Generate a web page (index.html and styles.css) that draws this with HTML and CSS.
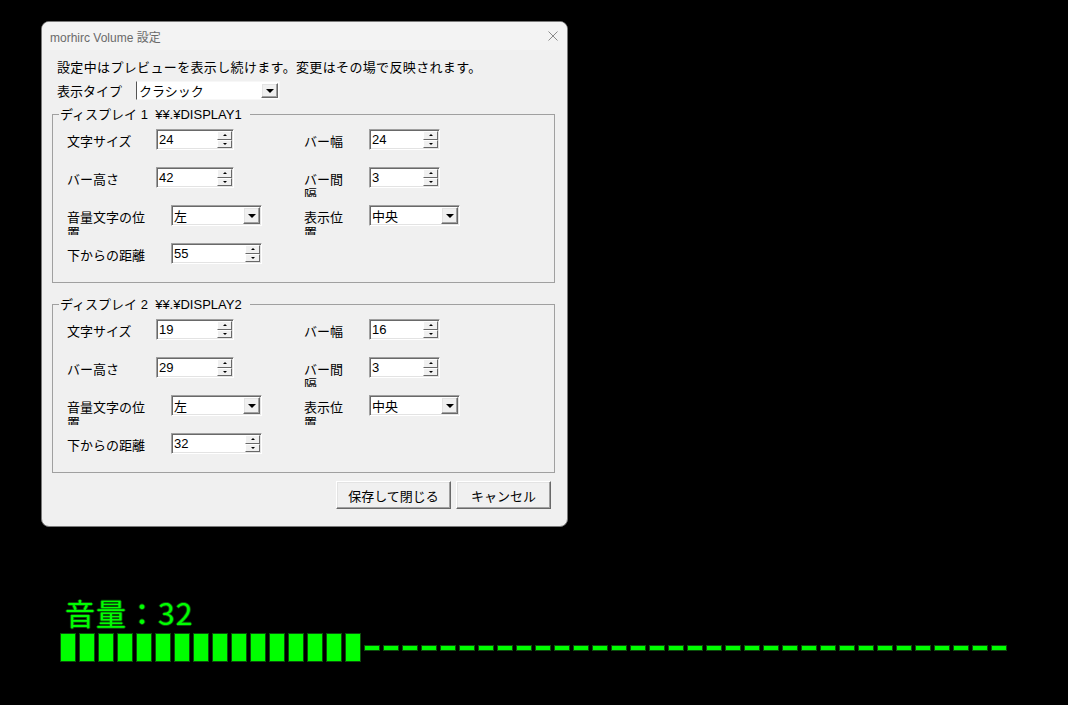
FILE: index.html
```html
<!DOCTYPE html>
<html lang="ja">
<head>
  <meta charset="UTF-8">
  <meta name="viewport" content="width=device-width, initial-scale=1.0">
  <title>morhirc Volume 設定</title>
  <link rel="stylesheet" href="styles.css">
</head>
<body>
  <!-- 設定ダイアログ -->
  <div class="window">
    <div class="titlebar">
      <span class="title">morhirc Volume 設定</span>
      <svg class="close" width="10" height="10" viewBox="0 0 10 10">
        <path d="M0.5 0.5 L9.5 9.5 M9.5 0.5 L0.5 9.5" stroke="#8a8a8a" stroke-width="1" fill="none"/>
      </svg>
    </div>

    <div class="client">
      <p class="note">設定中はプレビューを表示し続けます。変更はその場で反映されます。</p>

      <div class="type-row">
        <span class="type-label">表示タイプ</span>
        <div class="combo flat type-combo">
          <span class="value">クラシック</span>
          <span class="drop"></span>
        </div>
      </div>

      <!-- ディスプレイ 1 -->
      <fieldset class="group">
        <legend>ディスプレイ 1&nbsp;&nbsp;¥¥.¥DISPLAY1</legend>
        <div class="fields">
          <div class="field">
            <span class="lbl">文字サイズ</span>
            <div class="spin short"><span class="value">24</span><span class="updown"><span class="up"></span><span class="down"></span></span></div>
          </div>
          <div class="field">
            <span class="lbl right">バー幅</span>
            <div class="spin small"><span class="value">24</span><span class="updown"><span class="up"></span><span class="down"></span></span></div>
          </div>

          <div class="field">
            <span class="lbl">バー高さ</span>
            <div class="spin short"><span class="value">42</span><span class="updown"><span class="up"></span><span class="down"></span></span></div>
          </div>
          <div class="field">
            <span class="lbl right">バー間隔</span>
            <div class="spin small"><span class="value">3</span><span class="updown"><span class="up"></span><span class="down"></span></span></div>
          </div>

          <div class="field">
            <span class="lbl wide">音量文字の位置</span>
            <div class="combo"><span class="value">左</span><span class="drop"></span></div>
          </div>
          <div class="field">
            <span class="lbl right">表示位置</span>
            <div class="combo"><span class="value">中央</span><span class="drop"></span></div>
          </div>

          <div class="field">
            <span class="lbl wide">下からの距離</span>
            <div class="spin long"><span class="value">55</span><span class="updown"><span class="up"></span><span class="down"></span></span></div>
          </div>
        </div>
      </fieldset>

      <!-- ディスプレイ 2 -->
      <fieldset class="group second">
        <legend>ディスプレイ 2&nbsp;&nbsp;¥¥.¥DISPLAY2</legend>
        <div class="fields">
          <div class="field">
            <span class="lbl">文字サイズ</span>
            <div class="spin short"><span class="value">19</span><span class="updown"><span class="up"></span><span class="down"></span></span></div>
          </div>
          <div class="field">
            <span class="lbl right">バー幅</span>
            <div class="spin small"><span class="value">16</span><span class="updown"><span class="up"></span><span class="down"></span></span></div>
          </div>

          <div class="field">
            <span class="lbl">バー高さ</span>
            <div class="spin short"><span class="value">29</span><span class="updown"><span class="up"></span><span class="down"></span></span></div>
          </div>
          <div class="field">
            <span class="lbl right">バー間隔</span>
            <div class="spin small"><span class="value">3</span><span class="updown"><span class="up"></span><span class="down"></span></span></div>
          </div>

          <div class="field">
            <span class="lbl wide">音量文字の位置</span>
            <div class="combo"><span class="value">左</span><span class="drop"></span></div>
          </div>
          <div class="field">
            <span class="lbl right">表示位置</span>
            <div class="combo"><span class="value">中央</span><span class="drop"></span></div>
          </div>

          <div class="field">
            <span class="lbl wide">下からの距離</span>
            <div class="spin long"><span class="value">32</span><span class="updown"><span class="up"></span><span class="down"></span></span></div>
          </div>
        </div>
      </fieldset>

      <div class="buttons">
        <button type="button" class="btn save">保存して閉じる</button>
        <button type="button" class="btn cancel">キャンセル</button>
      </div>
    </div>
  </div>

  <!-- プレビュー表示 -->
  <div class="preview">
    <div class="volume-text">音量：32</div>
    <div class="meter">
      <span class="seg"></span><span class="seg"></span><span class="seg"></span><span class="seg"></span>
      <span class="seg"></span><span class="seg"></span><span class="seg"></span><span class="seg"></span>
      <span class="seg"></span><span class="seg"></span><span class="seg"></span><span class="seg"></span>
      <span class="seg"></span><span class="seg"></span><span class="seg"></span><span class="seg"></span>
      <span class="seg off"></span><span class="seg off"></span><span class="seg off"></span><span class="seg off"></span>
      <span class="seg off"></span><span class="seg off"></span><span class="seg off"></span><span class="seg off"></span>
      <span class="seg off"></span><span class="seg off"></span><span class="seg off"></span><span class="seg off"></span>
      <span class="seg off"></span><span class="seg off"></span><span class="seg off"></span><span class="seg off"></span>
      <span class="seg off"></span><span class="seg off"></span><span class="seg off"></span><span class="seg off"></span>
      <span class="seg off"></span><span class="seg off"></span><span class="seg off"></span><span class="seg off"></span>
      <span class="seg off"></span><span class="seg off"></span><span class="seg off"></span><span class="seg off"></span>
      <span class="seg off"></span><span class="seg off"></span><span class="seg off"></span><span class="seg off"></span>
      <span class="seg off"></span><span class="seg off"></span>
    </div>
  </div>
</body>
</html>
```

FILE: styles.css
```css
body {
  margin: 0;
  padding: 0;
  background-color: #000;
  font-family: "Noto Sans CJK JP", sans-serif;
}

.window {
  width: 527px;
  height: 506px;
  margin: 21px 0 0 41px;
  box-sizing: border-box;
  border: 1px solid #7a7a7a;
  border-radius: 8px;
  overflow: hidden;
  background-color: #f0f0f0;
}

.titlebar {
  height: 28px;
  display: flex;
  align-items: center;
  justify-content: space-between;
  padding: 0 9px 0 8px;
  background-color: #f3f3f3;
}

.title {
  font-family: "Liberation Sans", "Noto Sans CJK JP", sans-serif;
  font-size: 12px;
  color: #6a6a6a;
}

.client {
  padding: 8px 12px 0 10px;
  font-size: 13px;
  color: #000;
}

.note {
  margin: 0;
  padding-left: 5px;
  line-height: 17px;
  letter-spacing: 0.35px;
}

.type-row {
  display: flex;
  align-items: center;
  margin-top: 6px;
  padding-left: 5px;
}

.type-label {
  width: 79px;
  line-height: 19px;
}

/* コンボボックスとスピン */
.spin, .combo {
  display: flex;
  height: 21px;
  box-sizing: border-box;
  padding: 1px;
  background-color: #fff;
  border: 1px solid;
  border-color: #a0a0a0 #fff #fff #a0a0a0;
  box-shadow: inset 1px 1px #696969, inset -1px -1px #e3e3e3;
}

.spin .value, .combo .value {
  flex: 1;
  padding-left: 1px;
  line-height: 17px;
}

.spin .value {
  font-family: "Liberation Sans", "Noto Sans CJK JP", sans-serif;
}

.spin.short { width: 78px; }
.spin.small { width: 71px; }
.spin.long { width: 91px; }
.combo { width: 91px; }

.type-combo {
  width: 144px;
  height: 19px;
}

.combo.flat {
  border-color: #f7f7f7;
  border-left-color: #555;
  box-shadow: none;
}

.combo.flat .value {
  line-height: 15px;
}

.drop {
  width: 17px;
  display: flex;
  align-items: center;
  justify-content: center;
  box-sizing: border-box;
  background-color: #f0f0f0;
  border: 1px solid;
  border-color: #fff #696969 #696969 #fff;
  box-shadow: inset -1px -1px #a0a0a0, inset 1px 1px #e3e3e3;
}

.drop::after {
  content: "";
  border-left: 4px solid transparent;
  border-right: 4px solid transparent;
  border-top: 4px solid #000;
}

.updown {
  width: 15px;
  display: flex;
  flex-direction: column;
}

.updown .up, .updown .down {
  flex: 1;
  display: flex;
  align-items: center;
  justify-content: center;
  box-sizing: border-box;
  background-color: #f0f0f0;
  border: 1px solid;
  border-color: #fff #696969 #696969 #fff;
}

.updown .up::after {
  content: "";
  border-left: 2px solid transparent;
  border-right: 2px solid transparent;
  border-bottom: 2px solid #000;
}

.updown .down::after {
  content: "";
  border-left: 2px solid transparent;
  border-right: 2px solid transparent;
  border-top: 2px solid #000;
}

/* グループ */
.group {
  margin: 7px 0 0 0;
  padding: 0 6px 18px 6px;
  border: 1px solid #a0a0a0;
  min-inline-size: 0;
}

.group.second {
  margin-top: 14px;
}

.group legend {
  padding: 0 8px 0 1px;
  line-height: 15px;
  font-family: "Liberation Sans", "Noto Sans CJK JP", sans-serif;
}

.fields {
  display: grid;
  grid-template-columns: 237px 1fr;
  grid-auto-rows: 21px;
  row-gap: 17px;
  padding: 7px 0 0 8px;
}

.field {
  display: flex;
  align-items: flex-start;
}

.lbl {
  width: 89px;
  height: 30px;
  box-sizing: border-box;
  padding-top: 4px;
  line-height: 15px;
  overflow: hidden;
}

.lbl.wide {
  width: 104px;
  padding-right: 16px;
}

.lbl.right {
  width: 65px;
  padding-right: 21px;
}

/* ボタン */
.buttons {
  display: flex;
  justify-content: flex-end;
  gap: 5px;
  margin-top: 8px;
  padding-right: 4px;
}

.btn {
  height: 28px;
  box-sizing: border-box;
  font-family: "Noto Sans CJK JP", sans-serif;
  font-size: 13px;
  color: #000;
  background-color: #f0f0f0;
  border: 1px solid;
  border-color: #fff #696969 #696969 #fff;
  box-shadow: inset -1px -1px #a0a0a0, inset 1px 1px #e3e3e3;
  padding: 0;
}

.btn.save { width: 115px; }
.btn.cancel { width: 95px; }

/* プレビュー */
.preview {
  margin: 70px 0 0 60px;
}

.volume-text {
  margin-left: 5px;
  font-size: 30px;
  line-height: 30px;
  letter-spacing: 1px;
  color: #00ff00;
  text-shadow: 1px 0 #0a4a0a, -1px 0 #0a4a0a, 0 1px #0a4a0a, 0 -1px #0a4a0a;
}

.meter {
  display: flex;
  align-items: center;
  gap: 3px;
  margin-top: 6px;
  height: 29px;
}

.seg {
  width: 16px;
  height: 29px;
  box-sizing: border-box;
  border: 1px solid #0b4f0b;
  background-color: #00ff00;
}

.seg.off {
  height: 6px;
}
```
